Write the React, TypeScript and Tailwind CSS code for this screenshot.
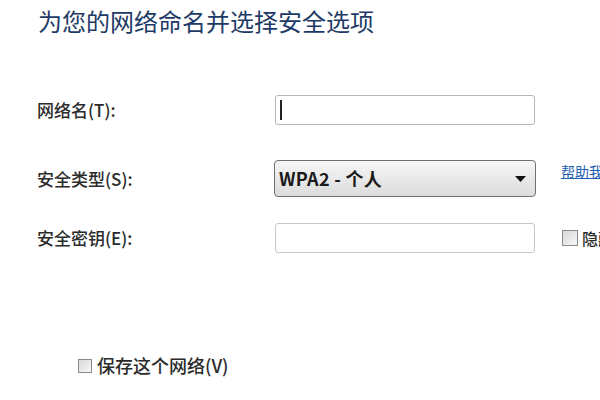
import React from "react";

export default function App() {
  return (
    <div
      className="w-[600px] h-[400px] bg-white overflow-hidden relative"
      style={{ fontFamily: '"Noto Sans CJK SC", "Noto Sans", sans-serif' }}
    >
      <div className="pl-[38px] pt-[5px] h-[95px]">
        <h1 className="text-[24px] leading-[32px] text-[#1d3a66] whitespace-nowrap">
          为您的网络命名并选择安全选项
        </h1>
      </div>
      <div className="pl-[37px] flex flex-col">
        <div className="flex items-center h-[30px]">
          <div className="w-[238px] shrink-0 text-[17px] text-[#2b2b2b] font-medium whitespace-nowrap">网络名(T):</div>
          <div className="w-[260px] shrink-0 h-[30px] border border-[#b5b5b5] rounded-[3px] bg-white flex items-center pl-[4px]">
            <div className="w-[2px] h-[20px] bg-[#222]" />
          </div>
        </div>
        <div className="flex items-center h-[37px] mt-[35px]">
          <div className="w-[237px] shrink-0 text-[17px] text-[#2b2b2b] font-medium whitespace-nowrap">安全类型(S):</div>
          <div className="w-[262px] shrink-0 h-[37px] border border-[#707070] rounded-[4px] bg-gradient-to-b from-[#f6f6f6] to-[#dcdcdc] flex items-center justify-between pl-[4px] pr-[9px]">
            <span className="text-[18px] text-[#1a1a1a] font-semibold tracking-[0.3px]">WPA2 - 个人</span>
            <svg width="11" height="6" viewBox="0 0 11 6">
              <path d="M0 0 L11 0 L5.5 6 Z" fill="#111" />
            </svg>
          </div>
          <a className="ml-[25px] shrink-0 text-[14px] text-[#1f5fb0] underline whitespace-nowrap -mt-[14px]">帮助我选择</a>
        </div>
        <div className="flex items-center h-[30px] mt-[26px]">
          <div className="w-[238px] shrink-0 text-[17px] text-[#2b2b2b] font-medium whitespace-nowrap">安全密钥(E):</div>
          <div className="w-[260px] shrink-0 h-[30px] border border-[#c8c8c8] rounded-[3px] bg-white" />
          <div className="ml-[27px] shrink-0 flex items-center gap-[4px] whitespace-nowrap">
            <div className="w-[16px] h-[16px] shrink-0 border border-[#8a8a8a] bg-gradient-to-br from-[#d8d8d8] to-[#f8f8f8]" />
            <span className="text-[16px] text-[#2b2b2b] font-medium">隐藏字符(H)</span>
          </div>
        </div>
        <div className="flex items-center gap-[5px] ml-[41px] mt-[99px]">
          <div className="w-[14px] h-[14px] shrink-0 border border-[#8a8a8a] bg-gradient-to-br from-[#d8d8d8] to-[#f8f8f8]" />
          <span className="text-[18px] text-[#2b2b2b] font-medium whitespace-nowrap">保存这个网络(V)</span>
        </div>
      </div>
    </div>
  );
}
